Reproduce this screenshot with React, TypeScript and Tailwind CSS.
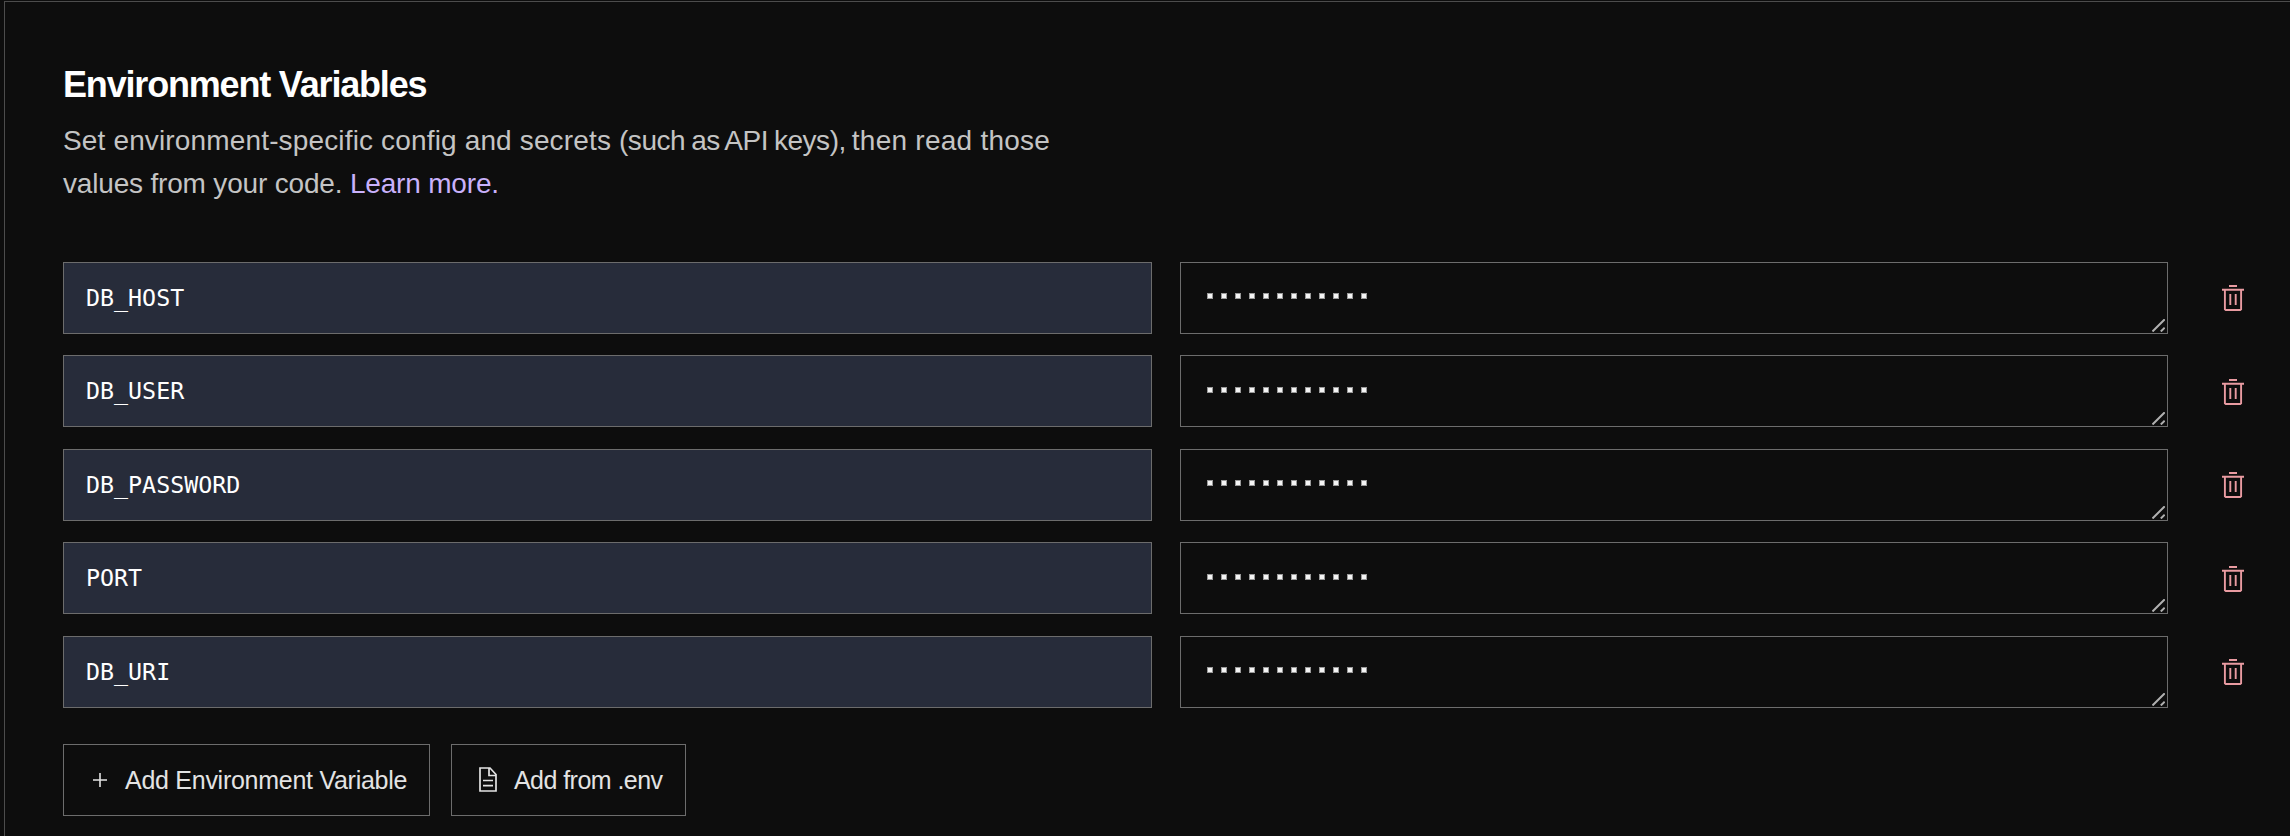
const VARIABLES = ["DB_HOST", "DB_USER", "DB_PASSWORD", "PORT", "DB_URI"];

function MaskedValue() {
  return (
    <div className="flex gap-[8.04px] pl-[26px] pt-[30.4px]">
      {Array.from({ length: 12 }, (_, i) => (
        <span key={i} className="size-[6px] border border-[#9a9a9a] bg-[#f4f4f4]" />
      ))}
    </div>
  );
}

function TrashIcon() {
  return (
    <svg className="h-[26px] w-[22px]" viewBox="0 0 22 26" fill="none" stroke="#e99ba1" strokeWidth="1.9">
      <path d="M7 1H15M0 4.7H22" />
      <path d="M2.9 5V24.2L3.8 25H18.2L19.1 24.2V5" />
      <path d="M8.3 9V20M13.7 9V20" />
    </svg>
  );
}

function ResizeGrip() {
  return (
    <svg className="absolute right-[2px] bottom-[1px] size-[13px]" viewBox="0 0 13 13" stroke="#b0b0b0" strokeWidth="2">
      <path d="M0.5 12.5L12.7 0.3M8.8 12.5L12.7 8.6" />
    </svg>
  );
}

function VariableRow({ name }: { name: string }) {
  return (
    <div className="flex h-[72px]">
      <div className="flex w-[1089px] items-center border border-[#6c6c6c] bg-[#272c3a] pt-[1px] pl-[22px] font-['DejaVu_Sans_Mono',monospace] text-[23.3px] text-white">
        {name}
      </div>
      <div className="relative ml-[28px] w-[988px] border border-[#6c6c6c]">
        <MaskedValue />
        <ResizeGrip />
      </div>
      <button className="ml-[54px] flex items-start pt-[23.4px]" aria-label="Delete">
        <TrashIcon />
      </button>
    </div>
  );
}

export default function App() {
  return (
    <div className="h-[836px] w-[2290px] overflow-hidden bg-[#0d0d0d] pt-px pl-[4px] font-['Liberation_Sans',Arial,sans-serif]">
      <section className="h-full border-t border-l border-[#4c4c4c] pt-[60px] pl-[58px]">
        <h2 className="h-[46px] text-[36px] leading-[46px] font-bold tracking-[-1.18px] whitespace-nowrap text-white">
          Environment Variables
        </h2>
        <p className="mt-[11px] text-[28px] leading-[43px] whitespace-nowrap text-[#c4c4c4]">
          <span className="tracking-[0.15px]">Set environment-specific config and secrets </span>
          <span className="tracking-[-0.45px] [word-spacing:-1.4px]">(such as API keys), </span>
          <span className="tracking-[0.25px]">then read those</span>
          <br />
          <span className="tracking-[-0.18px]">
            values from your code. <a className="text-[#c9b1fb]">Learn more.</a>
          </span>
        </p>
        <div className="mt-[57px] flex flex-col gap-[21.4px]">
          {VARIABLES.map((name) => (
            <VariableRow key={name} name={name} />
          ))}
        </div>
        <div className="mt-[36.4px] flex gap-[21px] text-[25px] whitespace-nowrap text-[#e3e3e3]">
          <button className="flex h-[72px] w-[367px] items-center border border-[#6c6c6c] pl-[29px] tracking-[-0.27px]">
            <svg className="mr-[18px] size-[14px]" viewBox="0 0 14 14" stroke="#e3e3e3" strokeWidth="1.6">
              <path d="M7 0V14M0 7H14" />
            </svg>
            <span className="pt-[2px]">Add Environment Variable</span>
          </button>
          <button className="flex h-[72px] w-[235px] items-center border border-[#6c6c6c] pl-[27px] tracking-[-0.55px]">
            <svg className="mr-[17px] h-[25px] w-[18px]" viewBox="0 0 18 25" fill="none" stroke="#e3e3e3" strokeWidth="1.7">
              <path d="M1 1H11L17 7.5V24H1ZM10 1V8.5H17M4 13.5H14M4 18.7H14" />
            </svg>
            <span className="pt-[2px]">Add from .env</span>
          </button>
        </div>
      </section>
    </div>
  );
}
